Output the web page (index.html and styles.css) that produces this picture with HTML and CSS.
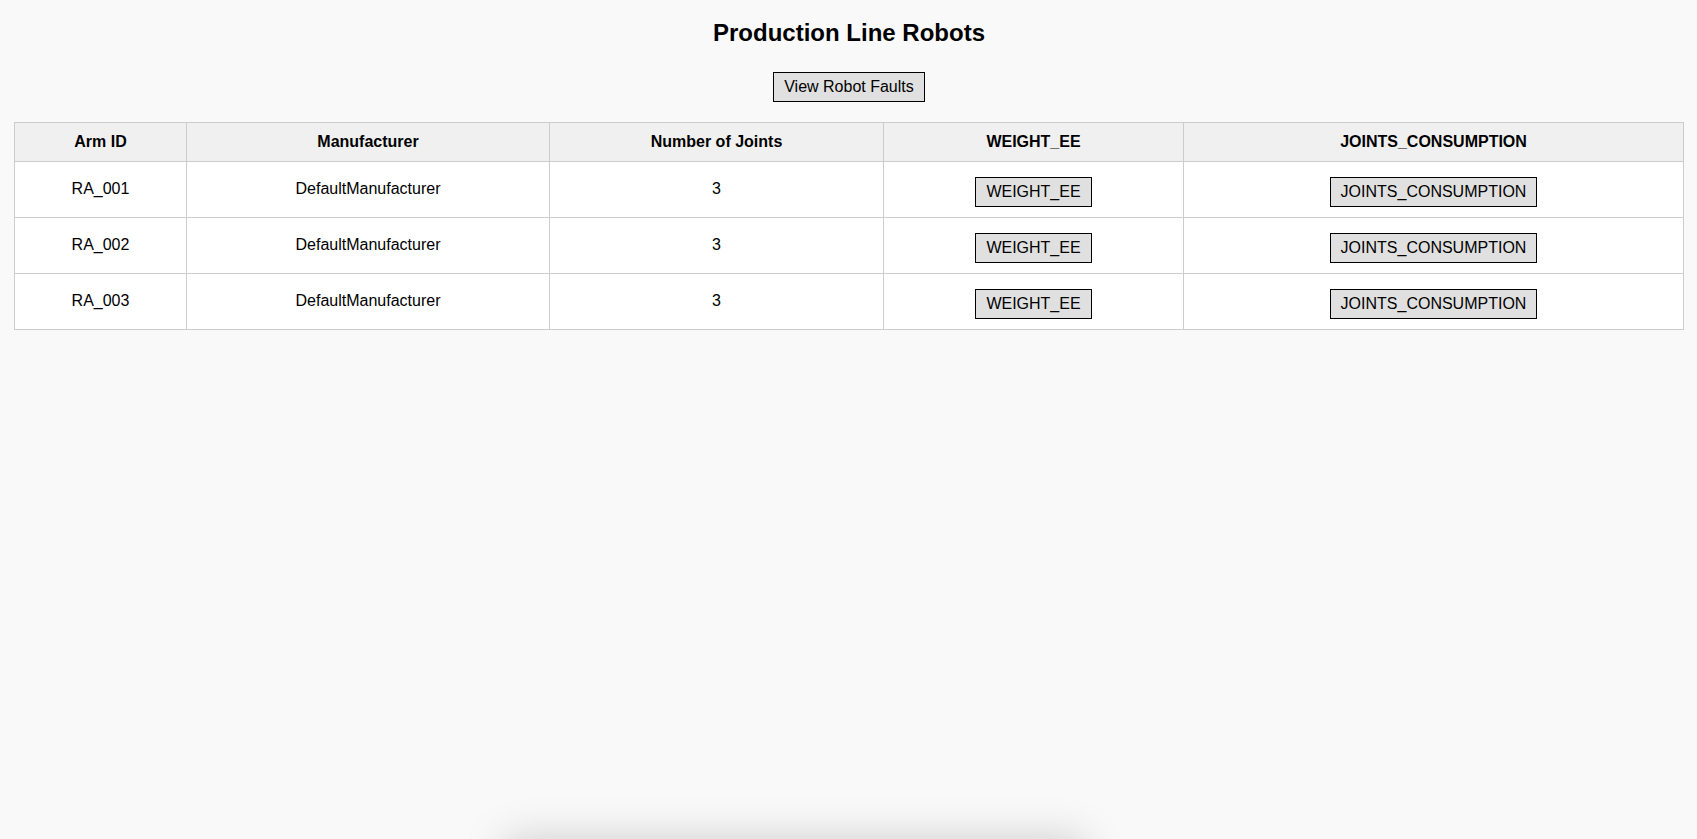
FILE: index.html
```html
<!DOCTYPE html>
<html lang="en">
<head>
<meta charset="utf-8">
<title>Production Line Robots</title>
<link rel="stylesheet" href="styles.css">
</head>
<body>
<div class="page">
  <h1 class="title">Production Line Robots</h1>
  <div class="toolbar">
    <button class="btn">View Robot Faults</button>
  </div>
  <table class="robots">
    <colgroup>
      <col class="c-id">
      <col class="c-man">
      <col class="c-joints">
      <col class="c-weight">
      <col class="c-cons">
    </colgroup>
    <thead>
      <tr>
        <th>Arm ID</th>
        <th>Manufacturer</th>
        <th>Number of Joints</th>
        <th>WEIGHT_EE</th>
        <th>JOINTS_CONSUMPTION</th>
      </tr>
    </thead>
    <tbody>
      <tr>
        <td class="txt">RA_001</td>
        <td class="txt">DefaultManufacturer</td>
        <td class="txt">3</td>
        <td><button class="btn cell-btn">WEIGHT_EE</button></td>
        <td><button class="btn cell-btn">JOINTS_CONSUMPTION</button></td>
      </tr>
      <tr>
        <td class="txt">RA_002</td>
        <td class="txt">DefaultManufacturer</td>
        <td class="txt">3</td>
        <td><button class="btn cell-btn">WEIGHT_EE</button></td>
        <td><button class="btn cell-btn">JOINTS_CONSUMPTION</button></td>
      </tr>
      <tr>
        <td class="txt">RA_003</td>
        <td class="txt">DefaultManufacturer</td>
        <td class="txt">3</td>
        <td><button class="btn cell-btn">WEIGHT_EE</button></td>
        <td><button class="btn cell-btn">JOINTS_CONSUMPTION</button></td>
      </tr>
    </tbody>
  </table>
</div>
<div class="hidden-panel"></div>
</body>
</html>
```

FILE: styles.css
```css
html, body {
  margin: 0;
  padding: 0;
}

body {
  background: #f9f9f9;
  color: #000;
  font-family: "Liberation Sans", Arial, sans-serif;
  font-size: 16px;
  min-height: 839px;
  overflow: hidden;
}

.page {
  display: flex;
  flex-direction: column;
  align-items: stretch;
  padding: 19px 13px 0 14px;
}

.title {
  margin: 0 0 25px;
  font-size: 24px;
  line-height: 28px;
  font-weight: bold;
  text-align: center;
}

.toolbar {
  display: flex;
  justify-content: center;
  margin-bottom: 20px;
}

.btn {
  font-family: "Liberation Sans", Arial, sans-serif;
  font-size: 16px;
  line-height: 18px;
  color: #000;
  background: #e0e0e0;
  border: 1px solid #000;
  border-radius: 0;
  padding: 5px 10px;
  margin: 0;
  cursor: pointer;
}

.robots {
  width: 100%;
  border-collapse: collapse;
  table-layout: fixed;
  background: #fff;
}

.c-id { width: 172px; }
.c-man { width: 363px; }
.c-joints { width: 334px; }
.c-weight { width: 300px; }
.c-cons { width: auto; }

.robots th,
.robots td {
  border: 1px solid #ccc;
  padding: 10px;
  text-align: center;
  vertical-align: middle;
  line-height: 18px;
  font-size: 16px;
}

.robots td.txt {
  padding-top: 9px;
  padding-bottom: 11px;
}

.robots th {
  background: #f0f0f0;
  font-weight: bold;
}

.cell-btn {
  display: block;
  margin: 5px auto 0;
}

.hidden-panel {
  position: fixed;
  left: 505px;
  top: 100%;
  width: 580px;
  height: 200px;
  background: #fff;
  box-shadow: 0 0 40px rgba(0, 0, 0, 0.18);
}
```
